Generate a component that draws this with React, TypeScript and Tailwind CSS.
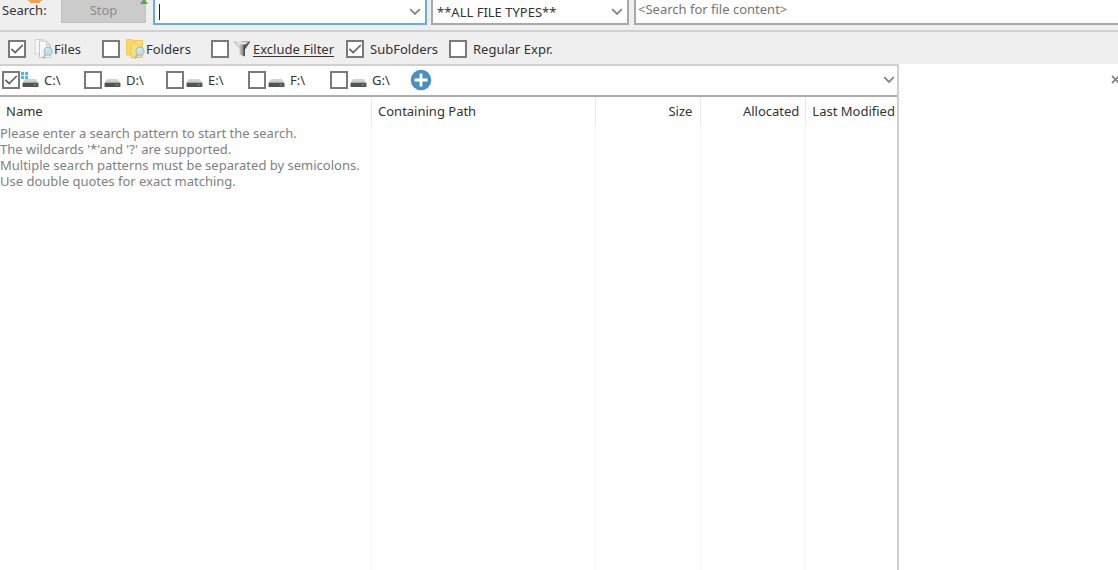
import React, { useState } from "react";

function Tick({ label, id, defaultChecked = false }: { label: string; id: string; defaultChecked?: boolean }) {
  const [on, setOn] = useState(defaultChecked);
  return (
    <span className="grid size-[18px] shrink-0">
      <input
        id={id}
        aria-label={label}
        type="checkbox"
        checked={on}
        onChange={(e) => setOn(e.target.checked)}
        className="col-start-1 row-start-1 size-[18px] appearance-none border-2 border-[#7a7a7a] bg-white"
      />
      {on && (
        <svg viewBox="0 0 18 18" className="pointer-events-none col-start-1 row-start-1 size-[18px]" fill="none" stroke="#606060" strokeWidth="1.7">
          <path d="M3.4 8.8 L7.2 12.6 L14.8 5" />
        </svg>
      )}
    </span>
  );
}

function Chevron() {
  return (
    <svg viewBox="0 0 12 8" className="h-2 w-3" fill="none" stroke="#858585" strokeWidth="1.8">
      <path d="M1.2 1.2 L6 6 L10.8 1.2" />
    </svg>
  );
}

function Lens() {
  return (
    <g>
      <path d="M11.5 17.5 L9 21.5" stroke="#cdb592" strokeWidth="2" />
      <circle cx="14" cy="14.2" r="4" fill="#bfe0f3" stroke="#a3bccd" strokeWidth="1.2" />
      <path d="M12 13.5 Q12.7 11.8 14.6 11.9" stroke="#eefaff" strokeWidth="1" fill="none" />
    </g>
  );
}

function FilesIcon() {
  return (
    <svg viewBox="0 0 20 24" className="h-6 w-5 shrink-0" fill="none">
      <path d="M1 2.5 H9 V17 H1 Z" fill="#f6f6f6" stroke="#d4d4d4" />
      <path d="M5.5 4 H12.5 L16.5 8 V20.5 H5.5 Z" fill="#f8f8f8" stroke="#c6c6c6" />
      <path d="M12.5 4 V8 H16.5" fill="#e2e2e2" stroke="#c6c6c6" />
      <Lens />
    </svg>
  );
}

function FoldersIcon() {
  return (
    <svg viewBox="0 0 20 24" className="h-6 w-5 shrink-0" fill="none">
      <path d="M0.5 2.5 H6 L7 3.5 H12 V18 H0.5 Z" fill="#f8d968" stroke="#efcb5a" />
      <path d="M5 5.5 H10 L11 3.5 H16.5 V20.5 H5 Z" fill="#fbe07c" stroke="#edc957" />
      <path d="M5.5 8 H16" stroke="#f3cf58" />
      <Lens />
    </svg>
  );
}

function FunnelIcon() {
  return (
    <svg viewBox="0 0 18 18" className="size-[18px] shrink-0">
      <defs>
        <linearGradient id="steel">
          <stop offset="0" stopColor="#a8a8a8" />
          <stop offset="0.3" stopColor="#dcdcdc" />
          <stop offset="0.52" stopColor="#9a9a9a" />
          <stop offset="0.62" stopColor="#4c4c4c" />
          <stop offset="1" stopColor="#6a6a6a" />
        </linearGradient>
      </defs>
      <path d="M0.5 1.5 H17.5 L12 9.5 V16.5 L6.5 14.5 V9.5 Z" fill="url(#steel)" />
      <path d="M3 2 H15 L12.5 4.5 H5.5 Z" fill="#e2e2e2" />
    </svg>
  );
}

function DriveIcon({ system }: { system: boolean }) {
  return (
    <svg viewBox="0 0 20 18" className="h-[18px] w-5 shrink-0">
      <path d="M5 8 H15.5 L18.5 12 H2.5 Z" fill="#d3d3d3" />
      <path d="M3.4 10.8 H17.6 L18.5 12 H2.5 Z" fill="#a9a9a9" />
      <rect x="2.5" y="12" width="16" height="4" rx="0.8" fill="#505351" />
      <rect x="13.5" y="13.2" width="3" height="1.4" fill="#35b545" />
      {system && (
        <g fill="#3dc3f0">
          <rect x="1" y="1" width="3" height="3" />
          <rect x="5" y="1" width="3" height="3" />
          <rect x="1" y="5" width="3" height="3" />
          <rect x="5" y="5" width="3" height="3" />
        </g>
      )}
    </svg>
  );
}

const drives = ["C:\\", "D:\\", "E:\\", "F:\\", "G:\\"];
const hints = [
  "Please enter a search pattern to start the search.",
  "The wildcards '*'and '?' are supported.",
  "Multiple search patterns must be separated by semicolons.",
  "Use double quotes for exact matching.",
];

export default function App() {
  return (
    <div className="flex min-h-screen flex-col overflow-x-hidden bg-white font-['Noto_Sans',sans-serif] text-[13px] leading-4 text-[#333]">
      <header className="flex h-8 items-start border-b-2 border-[#d0d0d0] bg-[#efefef]">
        <div className="relative w-[61px] shrink-0 pt-0.5 pl-0.5">
          <label htmlFor="pattern">Search:</label>
          <svg viewBox="0 0 14 3" className="absolute top-0 left-7 h-[3px] w-3.5">
            <path d="M0 0 H14 V1 H12 V3 H2 V1 H0 Z" fill="#f3a04e" />
          </svg>
        </div>
        <div className="relative w-[92px] shrink-0">
          <button type="button" disabled className="h-[23px] w-[85px] border border-t-0 border-[#c2c2c2] bg-[#cbcbcb] pb-0.5 text-[#8b8b8b]">
            Stop
          </button>
          <svg viewBox="0 0 8 4" className="absolute top-0 left-[79px] h-1 w-2">
            <path d="M3 0 H5 L8 4 H0 Z" fill="#55a84c" />
          </svg>
        </div>
        <div className="relative flex h-[25px] w-[274px] shrink-0 items-center border-2 border-t-0 border-[#63aee6] bg-white">
          <input id="pattern" type="text" className="h-full min-w-0 flex-1 pl-1 outline-none" />
          <span className="absolute top-1 left-1 h-4 w-px bg-[#222]" />
          <button type="button" aria-label="Search history" className="px-1">
            <Chevron />
          </button>
        </div>
        <div className="relative ml-1 flex h-[25px] w-[198px] shrink-0 items-center border-2 border-t-0 border-[#a8a8a8] bg-white">
          <select aria-label="File types" className="h-full w-full appearance-none pl-1 text-[#333]">
            <option>**ALL FILE TYPES**</option>
          </select>
          <span className="pointer-events-none absolute right-1">
            <Chevron />
          </span>
        </div>
        <input
          type="text"
          aria-label="File content"
          placeholder="<Search for file content>"
          className="ml-[5px] h-[25px] min-w-0 flex-1 border-2 border-t-0 border-r-0 border-[#a8a8a8] bg-white pb-1.5 pl-0.5 placeholder:text-[#757575]"
        />
      </header>

      <div className="flex h-8 items-center bg-[#efefef] pt-0.5 pl-2">
        <div className="flex w-[94px] items-center">
          <Tick id="files" label="Files" defaultChecked />
          <label htmlFor="files" className="flex items-center pl-2">
            <FilesIcon />
            Files
          </label>
        </div>
        <div className="flex w-[109px] items-center">
          <Tick id="folders" label="Folders" />
          <label htmlFor="folders" className="flex items-center pl-1.5">
            <FoldersIcon />
            Folders
          </label>
        </div>
        <div className="flex w-[135px] items-center">
          <Tick id="exclude" label="Exclude Filter" />
          <span className="flex items-center gap-0.5 pl-1">
            <FunnelIcon />
            <a href="#filter" className="whitespace-nowrap underline underline-offset-2">
              Exclude Filter
            </a>
          </span>
        </div>
        <div className="flex w-[103px] items-center">
          <Tick id="sub" label="SubFolders" defaultChecked />
          <label htmlFor="sub" className="pl-1.5">SubFolders</label>
        </div>
        <div className="flex items-center">
          <Tick id="regex" label="Regular Expr." />
          <label htmlFor="regex" className="pl-1.5">Regular Expr.</label>
        </div>
      </div>

      <div className="flex flex-1">
        <main className="flex flex-[899] flex-col border-t-2 border-r-2 border-[#d0d0d2]">
          <div className="flex h-[31px] items-center border-b-2 border-[#adadb1] pb-0.5 pl-0.5">
            {drives.map((d, i) => (
              <div key={d} className="flex w-[82px] items-center">
                <Tick id={"drive" + i} label={d} defaultChecked={i === 0} />
                <label htmlFor={"drive" + i} className="flex items-center gap-1">
                  <DriveIcon system={i === 0} />
                  {d}
                </label>
              </div>
            ))}
            <button type="button" aria-label="Add path" className="-ml-0.5">
              <svg viewBox="0 0 22 22" className="size-[22px]">
                <circle cx="11" cy="11" r="10.3" fill="#4a8fc2" />
                <path d="M11 4.5 V17.5 M4.5 11 H17.5" stroke="#fff" strokeWidth="2.8" />
              </svg>
            </button>
            <button type="button" aria-label="Show paths" className="mr-0.5 ml-auto">
              <Chevron />
            </button>
          </div>
          <table className="w-full flex-1 table-fixed border-collapse">
            <colgroup>
              <col className="w-[41.4%]" />
              <col className="w-[25%]" />
              <col className="w-[11.7%]" />
              <col className="w-[11.7%]" />
              <col />
            </colgroup>
            <thead>
              <tr className="h-7 text-left whitespace-nowrap *:border-r *:border-[#e8e8e8] *:font-normal">
                <th className="pl-1.5">Name</th>
                <th className="pl-1.5">Containing Path</th>
                <th className="pr-2 text-right">Size</th>
                <th className="pr-1.5 text-right">Allocated</th>
                <th className="border-r-0! pl-1.5">Last Modified</th>
              </tr>
            </thead>
            <tbody>
              <tr className="align-top *:border-r *:border-[#f5f5f5]">
                <td className="whitespace-nowrap text-[#808080]">
                  {hints.map((h) => (
                    <p key={h}>{h}</p>
                  ))}
                </td>
                <td />
                <td />
                <td />
                <td className="border-r-0!" />
              </tr>
            </tbody>
          </table>
        </main>
        <aside className="flex flex-[219] items-start justify-end overflow-hidden pt-[11px]">
          <button type="button" aria-label="Close panel" className="-mr-0.5">
            <svg viewBox="0 0 9 9" className="size-[9px]" stroke="#858585" strokeWidth="1.8">
              <path d="M1 1 L8 8 M8 1 L1 8" />
            </svg>
          </button>
        </aside>
      </div>
    </div>
  );
}
